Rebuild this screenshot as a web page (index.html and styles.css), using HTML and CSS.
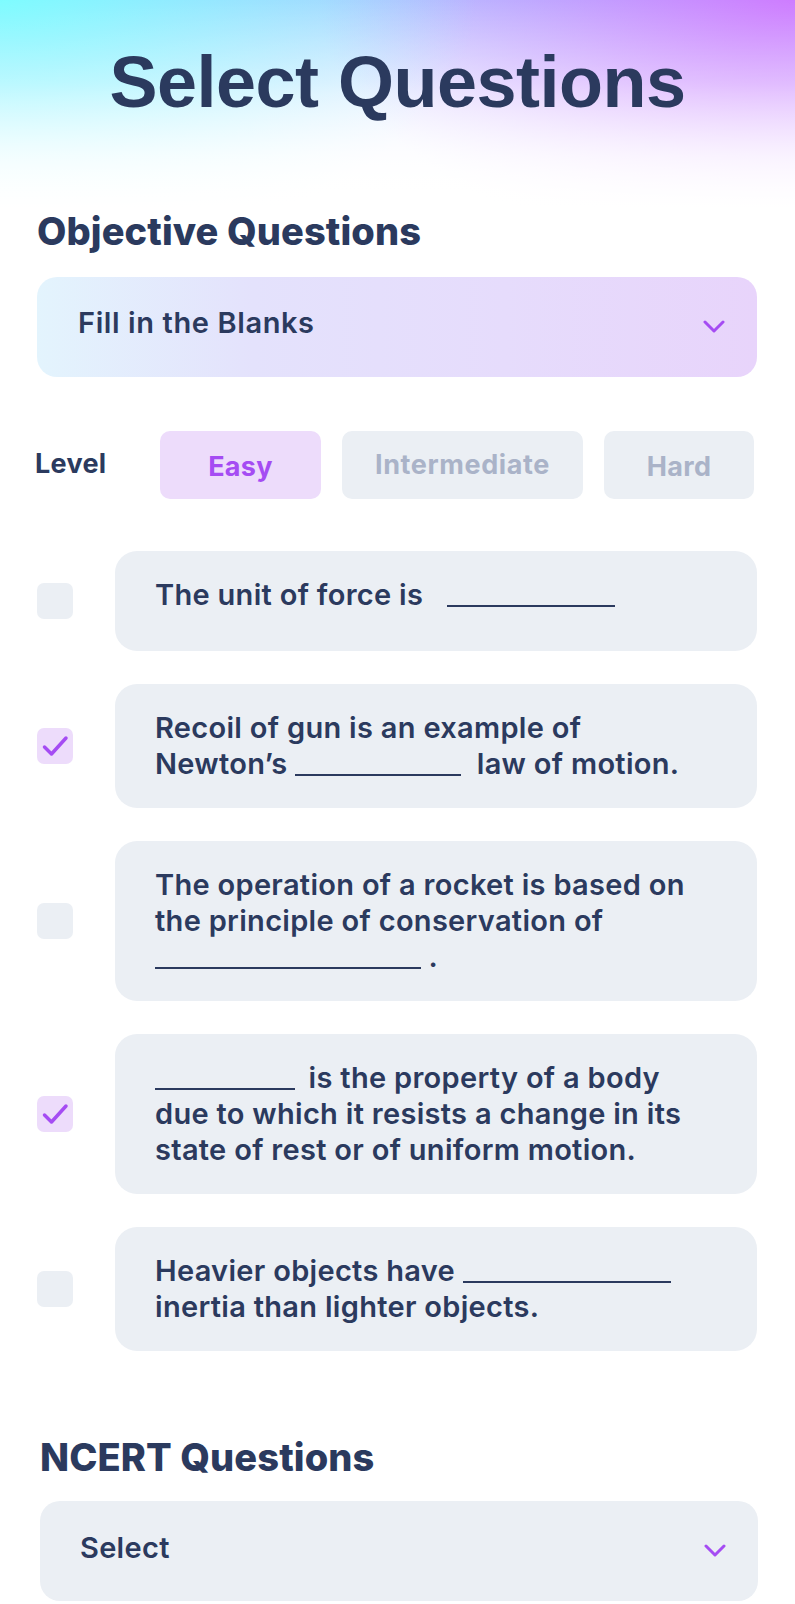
FILE: index.html
```html
<!DOCTYPE html>
<html lang="en">
<head>
<meta charset="utf-8">
<title>Select Questions</title>
<link rel="stylesheet" href="styles.css">
</head>
<body>
<header class="hero">
  <h1 class="hero__title">Select Questions</h1>
</header>
<main class="content">
  <section class="objective">
    <h2 class="section-title">Objective Questions</h2>
    <div class="dropdown dropdown--gradient">
      <span class="dropdown__label dropdown__label--raised dropdown__label--wide">Fill in the Blanks</span>
      <svg class="chevron" width="22" height="14" viewBox="0 0 22 14" aria-hidden="true"><polyline points="2,2 11,11 20,2"/></svg>
    </div>
    <div class="level-row">
      <span class="level-row__label">Level</span>
      <button class="level-btn level-btn--active">Easy</button>
      <button class="level-btn level-btn--mid">Intermediate</button>
      <button class="level-btn">Hard</button>
    </div>
    <ul class="question-list">
      <li class="question">
        <span class="checkbox"></span>
        <div class="question__card">The unit of force is <span class="blank blank--w168 blank--gap"></span></div>
      </li>
      <li class="question">
        <span class="checkbox checkbox--checked"><svg viewBox="0 0 36 36" width="36" height="36" aria-hidden="true"><polyline points="7.5,19 14.5,26 29,10"/></svg></span>
        <div class="question__card">Recoil of gun is an example of<br>Newton’s <span class="blank blank--w166 blank--after"></span> law of motion.</div>
      </li>
      <li class="question">
        <span class="checkbox"></span>
        <div class="question__card">The operation of a rocket is based on<br>the principle of conservation of<br><span class="blank blank--w266"></span> .</div>
      </li>
      <li class="question">
        <span class="checkbox checkbox--checked"><svg viewBox="0 0 36 36" width="36" height="36" aria-hidden="true"><polyline points="7.5,19 14.5,26 29,10"/></svg></span>
        <div class="question__card"><span class="blank blank--w140 blank--after-sm"></span> is the property of a body<br>due to which it resists a change in its<br>state of rest or of uniform motion.</div>
      </li>
      <li class="question">
        <span class="checkbox"></span>
        <div class="question__card">Heavier objects have <span class="blank blank--w208"></span><br>inertia than lighter objects.</div>
      </li>
    </ul>
  </section>
  <section class="ncert">
    <h2 class="section-title section-title--ncert">NCERT Questions</h2>
    <div class="dropdown dropdown--plain">
      <span class="dropdown__label dropdown__label--raised-sm">Select</span>
      <svg class="chevron" width="22" height="14" viewBox="0 0 22 14" aria-hidden="true"><polyline points="2,2 11,11 20,2"/></svg>
    </div>
  </section>
</main>
</body>
</html>
```
FILE: styles.css
```css
* { box-sizing: border-box; }

html, body {
  margin: 0;
  padding: 0;
  background: #ffffff;
}

body {
  width: 795px;
  font-family: "Inter", "Noto Sans", sans-serif;
  color: #2b3a5e;
}

/* ---------- header ---------- */
.hero {
  height: 208px;
  padding-top: 42px;
  background:
    linear-gradient(180deg, rgba(255, 255, 255, 0) 0%, rgba(255, 255, 255, 0.3) 40%, rgba(255, 255, 255, 0.78) 75%, #ffffff 100%),
    radial-gradient(ellipse 60% 125% at 0% 0%, rgba(126, 252, 255, 1) 0%, rgba(126, 252, 255, 0) 100%),
    radial-gradient(ellipse 60% 125% at 100% 0%, rgba(206, 124, 255, 1) 0%, rgba(206, 124, 255, 0) 100%),
    linear-gradient(180deg, #b3cdff 0%, #e6ebff 45%, #ffffff 92%);
}

.hero__title {
  margin: 0;
  font-family: "Liberation Sans", Arial, sans-serif;
  font-weight: 700;
  font-size: 72px;
  line-height: 80px;
  letter-spacing: -0.5px;
  text-align: center;
  color: #2b3a5e;
}

/* ---------- sections ---------- */
.objective {
  padding: 0 38px 0 37px;
}

.ncert {
  margin-top: 83px;
  padding: 0 37px 0 40px;
}

.section-title {
  margin: 0;
  font-weight: 800;
  font-size: 38px;
  line-height: 46px;
  letter-spacing: 0.1px;
  color: #2b3a5e;
}

.section-title--ncert {
  margin-bottom: 21px;
}

/* ---------- dropdowns ---------- */
.dropdown {
  height: 100px;
  display: flex;
  align-items: center;
  justify-content: space-between;
  padding: 0 32px 0 41px;
  border-radius: 20px;
}

.dropdown--gradient {
  margin-top: 23px;
  background: linear-gradient(90deg, #e3f4fd 0%, #e4e2fc 30%, #e6dcfc 65%, #e8d4fb 100%);
}

.dropdown--plain {
  background: #ebeff4;
  padding-left: 40px;
}

.dropdown__label {
  font-weight: 600;
  font-size: 29px;
  line-height: 36px;
  letter-spacing: 0.3px;
  color: #2b3a5e;
}

.dropdown__label--wide { letter-spacing: 0.6px; }
.dropdown__label--raised { margin-bottom: 8px; }
.dropdown__label--raised-sm { margin-bottom: 6px; }

.chevron {
  flex: none;
  fill: none;
  stroke: #a54cf3;
  stroke-width: 3;
  stroke-linecap: round;
  stroke-linejoin: round;
}

/* ---------- level ---------- */
.level-row {
  margin-top: 54px;
  display: grid;
  grid-template-columns: 102px 161px 241px 150px;
  column-gap: 21px;
  align-items: center;
}

.level-row__label {
  margin-left: -2px;
  margin-bottom: 3px;
  font-weight: 700;
  font-size: 27px;
  line-height: 34px;
  letter-spacing: 0.3px;
  color: #2b3a5e;
}

.level-btn {
  height: 68px;
  padding: 4px 0 0;
  border: none;
  border-radius: 10px;
  background: #ebeff4;
  font-family: "Inter", "Noto Sans", sans-serif;
  font-weight: 700;
  font-size: 27px;
  line-height: 34px;
  letter-spacing: 0.3px;
  color: #aab3c8;
  text-align: center;
}

.level-btn--mid {
  padding-top: 0;
  letter-spacing: 0.6px;
}

.level-btn--active {
  background: #eddcfb;
  color: #a54cf3;
}

/* ---------- questions ---------- */
.question-list {
  list-style: none;
  margin: 52px 0 0;
  padding: 0;
  display: flex;
  flex-direction: column;
  gap: 33px;
}

.question {
  display: grid;
  grid-template-columns: 36px 1fr;
  column-gap: 42px;
  align-items: center;
}

.checkbox {
  width: 36px;
  height: 36px;
  border-radius: 7px;
  background: #ebeff4;
  display: block;
}

.checkbox--checked {
  background: #eddcfb;
}

.checkbox svg {
  display: block;
  fill: none;
  stroke: #a54cf3;
  stroke-width: 3.5;
  stroke-linecap: round;
  stroke-linejoin: round;
}

.question__card {
  min-height: 100px;
  padding: 26px 40px;
  border-radius: 22px;
  background: #ebeff4;
  font-weight: 600;
  font-size: 29px;
  line-height: 36px;
  letter-spacing: 0.3px;
  color: #2b3a5e;
}

/* blanks */
.blank {
  display: inline-block;
  height: 0;
  border-bottom: 2px solid #2b3a5e;
  margin-bottom: -2px;
  vertical-align: baseline;
}

.blank--gap { margin-left: 16px; }
.blank--after { margin-right: 8px; }
.blank--after-sm { margin-right: 6px; }

.blank--w140 { width: 140px; }
.blank--w166 { width: 166px; }
.blank--w168 { width: 168px; }
.blank--w208 { width: 208px; }
.blank--w266 { width: 266px; }
```
